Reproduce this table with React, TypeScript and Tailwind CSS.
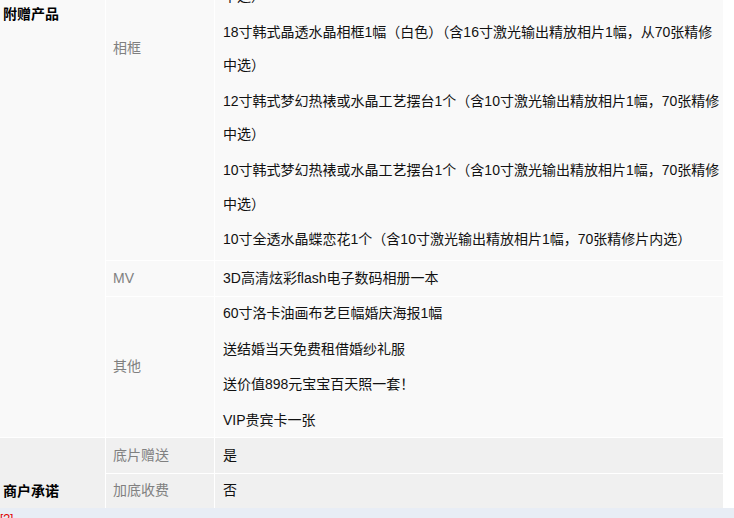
import React from "react";

const font = "font-['Liberation_Sans','Noto_Sans_CJK_SC',sans-serif]";

const frameItems: React.ReactNode[] = [
    "中选）",
    <>18寸韩式晶透水晶相框1幅（白色）（含16寸激光输出精放相片1幅，从70张精修<br/>中选）</>,
    <>12寸韩式梦幻热裱或水晶工艺摆台1个（含10寸激光输出精放相片1幅，70张精修<br/>中选）</>,
    <>10寸韩式梦幻热裱或水晶工艺摆台1个（含10寸激光输出精放相片1幅，70张精修<br/>中选）</>,
    "10寸全透水晶蝶恋花1个（含10寸激光输出精放相片1幅，70张精修片内选）",
];

const otherItems = [
    "60寸洛卡油画布艺巨幅婚庆海报1幅",
    "送结婚当天免费租借婚纱礼服",
    "送价值898元宝宝百天照一套！",
    "VIP贵宾卡一张",
];

const Label = ({children, className = ""}: {children: React.ReactNode, className?: string}) => (
    <div className={`px-[7px] text-[14px] leading-[2.4] text-[#808080] ${className}`}>{children}</div>
);

const App = () => {
    return (
        <div className={`w-[734px] h-[518px] overflow-hidden bg-white flex flex-col ${font}`}>
            <div
                className="-mt-[20px] w-[723px] grid grid-cols-[105px_108px_508px] grid-rows-[280px_35px_140px_35px_34px] gap-px bg-white text-[14px] leading-[2.4] text-[#111]">
                {/* 附赠产品 */}
                <div className="row-span-3 bg-[#f9f9f9] pl-[3px] pt-[18px] font-bold text-black">附赠产品</div>
                <div className="bg-[#f9f9f9] pt-[52px]">
                    <Label>相框</Label>
                </div>
                <div className="bg-[#f9f9f9] pl-[8px] flex flex-col gap-[2px] whitespace-nowrap">
                    {frameItems.map((item, i) => (
                        <p key={i}>{item}</p>
                    ))}
                </div>

                <div className="bg-[#f9f9f9] flex items-center">
                    <Label>MV</Label>
                </div>
                <div className="bg-[#f9f9f9] pl-[8px] flex items-center">
                    <p>3D高清炫彩flash电子数码相册一本</p>
                </div>

                <div className="bg-[#f9f9f9] flex items-center">
                    <Label>其他</Label>
                </div>
                <div className="bg-[#f9f9f9] pl-[8px] flex flex-col gap-[2px]">
                    {otherItems.map((item, i) => (
                        <p key={i}>{item}</p>
                    ))}
                </div>

                {/* 商户承诺 */}
                <div className="row-span-2 bg-[#f0f0f0] pl-[3px] flex items-end font-bold text-black">
                    <span className="leading-[34px]">商户承诺</span>
                </div>
                <div className="bg-[#f0f0f0] flex items-center">
                    <Label>底片赠送</Label>
                </div>
                <div className="bg-[#f0f0f0] pl-[8px] flex items-center">是</div>

                <div className="bg-[#f0f0f0] flex items-center">
                    <Label>加底收费</Label>
                </div>
                <div className="bg-[#f0f0f0] pl-[8px] flex items-center">否</div>
            </div>

            <div className="h-[10px] bg-[#e8edf5] overflow-hidden">
                <span className="block pt-[4px] text-[12px] leading-[14px] text-[#e00000]">[?]</span>
            </div>
        </div>
    );
};

export default App;
